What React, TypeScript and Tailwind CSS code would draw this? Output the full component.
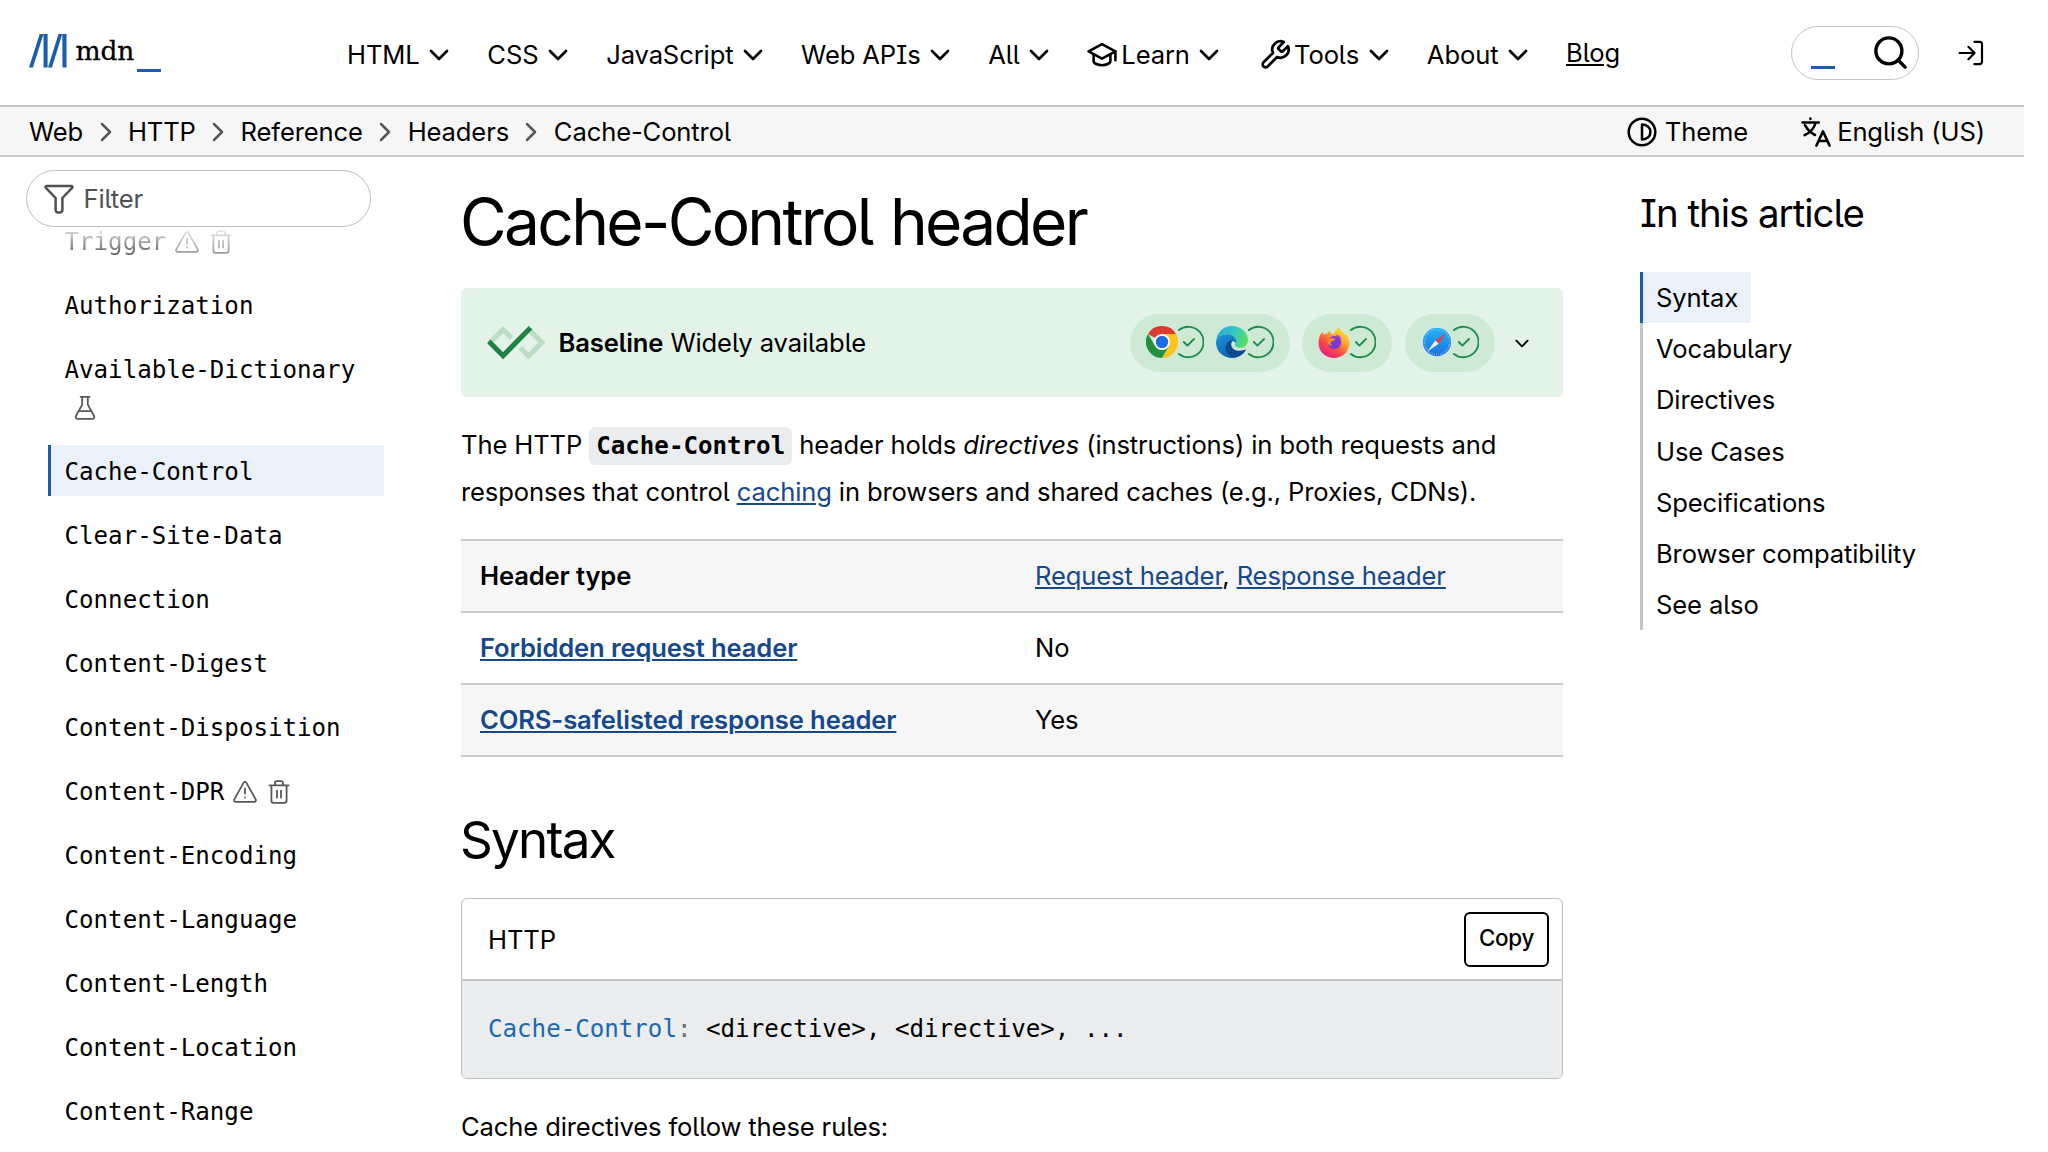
import React from "react";
import { Search } from "lucide-react";

const sans =
  "font-['Inter','Liberation_Sans',sans-serif] [font-feature-settings:'cv05','cv08']";
const mono = "font-['DejaVu_Sans_Mono','Liberation_Mono',monospace] text-[24.15px] tracking-normal";

function Chevron({ className }: { className: string }) {
  return (
    <svg viewBox="0 0 20 12" className={className} fill="none" stroke="currentColor" strokeWidth="2.7" strokeLinecap="round" strokeLinejoin="round">
      <path d="M2 2l8 8 8-8" />
    </svg>
  );
}

function CrumbArrow() {
  return (
    <svg viewBox="0 0 12 20" className="h-5 w-3 shrink-0 text-[#55595c]" fill="none" stroke="currentColor" strokeWidth="2.5" strokeLinecap="round" strokeLinejoin="round">
      <path d="M2 2l8 8-8 8" />
    </svg>
  );
}

function CapIcon() {
  return (
    <svg viewBox="0 0 30 26" className="mr-[4px] h-[26px] w-[30px]" fill="none" stroke="currentColor" strokeWidth="2.6" strokeLinecap="round" strokeLinejoin="round">
      <path d="M1.6 9.4L15 2.2l13.4 7.2L15 16.6z" />
      <path d="M28.4 9.4v8.8" />
      <path d="M6.6 12.4v6.8c0 2.2 4.6 4 8.4 4s8.4-1.8 8.4-4v-6.8" />
    </svg>
  );
}

function WrenchIcon() {
  return (
    <svg viewBox="1 1 22 22" className="mr-[4.500px] ml-[2px] h-[32px] w-[30px]" fill="none" stroke="currentColor" strokeWidth="2" strokeLinecap="round" strokeLinejoin="round">
      <path d="M14.7 6.3a1 1 0 0 0 0 1.4l1.6 1.6a1 1 0 0 0 1.4 0l3.77-3.77a6 6 0 0 1-7.94 7.94l-6.91 6.91a2.12 2.12 0 0 1-3-3l6.91-6.91a6 6 0 0 1 7.94-7.94l-3.76 3.76z" />
    </svg>
  );
}

function WarnIcon() {
  return (
    <svg viewBox="0 0 24 24" className="ml-[9px] h-6 w-6" fill="none" stroke="#55595c" strokeWidth="1.8" strokeLinecap="round" strokeLinejoin="round">
      <path d="M10.7 2.6L1.3 19.4a1.6 1.6 0 0 0 1.4 2.4h18.6a1.6 1.6 0 0 0 1.4-2.4L13.3 2.6a1.5 1.5 0 0 0-2.6 0z" />
      <path d="M12 8.6v5M12 17.4v.2" />
    </svg>
  );
}

function TrashIcon() {
  return (
    <svg viewBox="0 0 22 24" className="ml-[11px] h-6 w-[22px]" fill="none" stroke="#55595c" strokeWidth="1.8" strokeLinecap="round" strokeLinejoin="round">
      <path d="M1.4 5.4h19.2M3.4 5.4v15.4a2 2 0 0 0 2 2h11.2a2 2 0 0 0 2-2V5.4M7 5.2V3a1.800 1.800 0 0 1 1.800-1.800h4.400A1.800 1.800 0 0 1 15 3v2.200M9 10.600v7M13 10.600v7" />
    </svg>
  );
}

function FlaskIcon() {
  return (
    <svg viewBox="0 0 22 26" className="ml-[9px] h-[26px] w-[22px]" fill="none" stroke="#55595c" strokeWidth="1.8" strokeLinecap="round" strokeLinejoin="round">
      <path d="M6.6 1.8h9M8.2 2v7.6L1.9 21a2 2 0 0 0 1.8 2.9h14.6a2 2 0 0 0 1.8-2.9L13.8 9.6V2M4.6 16.2h12.8" />
    </svg>
  );
}

function CheckArc() {
  return (
    <svg viewBox="0 0 26 34" className="h-[34px] w-[26px]" fill="none" stroke="#1e8e4e" strokeWidth="1.9" strokeLinecap="round" strokeLinejoin="round">
      <path d="M.9 5.1a15.2 15.2 0 1 1 0 23.8" />
      <path d="M5.8 17l3.6 3.6 6.6-6.6" />
    </svg>
  );
}

function ChromeLogo() {
  return (
    <svg viewBox="0 0 32 32" className="h-8 w-8">
      <path d="M16 16L2.1 8A16 16 0 0 1 29.9 8z" fill="#dd3b2e" />
      <path d="M16 8h13.9A16 16 0 0 1 16 32l6.9-12z" fill="#fcc31e" />
      <path d="M2.1 8A16 16 0 0 0 16 32l6.9-12-13.8 0z" fill="#23903f" />
      <circle cx="16" cy="16" r="8" fill="#fff" />
      <circle cx="16" cy="16" r="6.2" fill="#1a6ce0" />
    </svg>
  );
}

function EdgeLogo() {
  return (
    <svg viewBox="0 0 32 32" className="h-8 w-8">
      <defs>
        <linearGradient id="edgeTop" x1="0" y1="0.3" x2="1" y2="0.6">
          <stop offset="0" stopColor="#2aa9dc" />
          <stop offset="0.5" stopColor="#34c5c6" />
          <stop offset="1" stopColor="#5ade62" />
        </linearGradient>
        <linearGradient id="edgeLow" x1="0" y1="0" x2="0.6" y2="1">
          <stop offset="0" stopColor="#1a94dc" />
          <stop offset="1" stopColor="#0f5fae" />
        </linearGradient>
      </defs>
      <path d="M.2 14.5C1 6 7.700 0 16 0c9 0 16 6.600 16 14 0 4.500-3.400 7.800-8 7.800-3 0-5.200-1.100-5.200-2.500 0-.9 1.500-1.500 1.500-4 0-3.700-4-7-9.300-7C5.500 8.300 1.500 11 .2 14.500z" fill="url(#edgeTop)" />
      <path d="M0 16.500C.3 11 5 8.200 11 8.200c5.500 0 9.300 3.400 9.300 7 0 1-.2 1.800-.6 2.400C18.500 15 15.500 14 13 15.500c-3.500 2-3.500 8 .5 11.500 3 2.700 8 3.400 12 .8C23 30.500 19.500 32 16 32 7 32 0 25 0 16.500z" fill="url(#edgeLow)" />
      <path d="M13.500 14.800C9.500 17 8 23 11.500 27.500c2.300 3 5.500 4.500 8.200 4C24 30.600 27.500 28 29.600 24.600c.4-.7-.2-1.200-.9-.9-5.200 2.300-12.200 1.200-13.400-4.200-.5-2 .2-3.700 1.700-4.700-1.100-.6-2.400-.6-3.500 0z" fill="#0c4a92" />
    </svg>
  );
}

function FirefoxLogo() {
  return (
    <svg viewBox="0 0 32 32" className="h-8 w-8">
      <defs>
        <linearGradient id="fox" x1="0.85" y1="0.05" x2="0.2" y2="0.95">
          <stop offset="0" stopColor="#ffe93c" />
          <stop offset="0.35" stopColor="#ffa52b" />
          <stop offset="0.65" stopColor="#fb4c41" />
          <stop offset="1" stopColor="#e8198b" />
        </linearGradient>
      </defs>
      <path d="M4.500 5.500c.2 1.500.8 2.400 1.500 3C7 7.800 8 7.500 9.500 7.400 10 6 11 5.200 12 4.700c0 1.600.8 2.600 2.200 3.300h2C16.200 5.600 18.500 2.500 21 1c.3 2.200 2 3.400 4 5.300 1 1 1.700 2 2.100 3 .3-.5.2-1.300 0-2C30 10 31.500 13.500 31.500 17 31.500 25.500 24.500 32 16 32S.5 25.500.5 17c0-4.300 1.500-8.500 4-11.500z" fill="url(#fox)" />
      <circle cx="16.500" cy="16.500" r="6.600" fill="#7a3ad8" />
      <path d="M9.500 14c2-2.600 5-2.200 7-1.600 1.200.4 1.200 1.300 0 1.800-1.500.7-3.500.9-3.900 2.600-.2 1.200.5 2 1.500 2.600-3 .6-5.200-2-4.600-5.400z" fill="#ff8a2a" />
      <path d="M17.500 8.500c3 .3 5.500 2.500 5.900 5.600-1-1.400-2.300-1.900-3.700-1.700-.3-1.700-1-2.900-2.200-3.900z" fill="#b833e1" />
    </svg>
  );
}

function SafariLogo() {
  return (
    <svg viewBox="0 0 32 32" className="h-8 w-8">
      <defs>
        <linearGradient id="saf" x1="0" y1="0" x2="0" y2="1">
          <stop offset="0" stopColor="#24b2f4" />
          <stop offset="1" stopColor="#1d6fe0" />
        </linearGradient>
      </defs>
      <circle cx="16" cy="16" r="15.300" fill="#dbe7ee" />
      <circle cx="16" cy="16" r="14.200" fill="url(#saf)" />
      <circle cx="16" cy="16" r="12.600" fill="none" stroke="#8fcbf6" strokeWidth="1.600" strokeDasharray=".7 1.500" />
      <path d="M25.500 7L17.600 17.800l-3.300-3.400z" fill="#e8403c" />
      <path d="M6.500 25.500l7.800-11.100 3.300 3.400z" fill="#f4f6f8" />
    </svg>
  );
}

const nav = [
  { label: "HTML" },
  { label: "CSS" },
  { label: "JavaScript" },
  { label: "Web APIs" },
  { label: "All" },
  { label: "Learn", icon: <CapIcon /> },
  { label: "Tools", icon: <WrenchIcon /> },
  { label: "About" },
];

function Header() {
  return (
    <header className="flex h-[107px] items-center border-b-2 border-[#c6c6c6]">
      <div className="flex w-[347px] shrink-0 items-start pl-[29px]">
        <svg viewBox="0 0 38 34" className="h-[34px] w-[38px]">
          <path d="M0 33.500L10.700 0h3.800L3.900 33.500zM14.500 0h4.100v33.500h-4zM19 33.500L29.500 0h3.800L22.900 33.500zM33.300 0h4.200v33.500h-4z" fill="#1b5cad" />
        </svg>
        <span className="ml-[8.500px] font-['DejaVu_Serif','Liberation_Serif',serif] text-[26.500px] leading-[34px] [-webkit-text-stroke:0.300px_#000]">mdn</span>
        <span className="ml-[3px] mt-[35px] h-[3px] w-[24px] bg-[#1b5cad]" />
      </div>
      <nav className="mt-[5px] flex items-center gap-[38.200px]">
        {nav.map((n) => (
          <span key={n.label} className="flex items-center">
            {n.icon}
            {n.label}
            <Chevron className="ml-[9.500px] h-3 w-5" />
          </span>
        ))}
        <a className="mb-[3px] underline decoration-[2px] underline-offset-[2px]">Blog</a>
      </nav>
      <div className="ml-auto mr-[105px] flex h-[54px] w-[128px] items-center rounded-full border-[1.600px] border-[#c6c6c6] pl-[19px]">
        <span className="mt-[29px] h-[3px] w-6 bg-[#1b5cad]" />
        <Search className="ml-[36px] h-[39px] w-[39px]" strokeWidth={2.100} />
      </div>
      <svg viewBox="0 0 26 26" className="mr-[40px] -ml-[66px] h-[26px] w-[26px]" fill="none" stroke="currentColor" strokeWidth="2.200" strokeLinecap="round" strokeLinejoin="round">
        <path d="M1.600 13h15M10.400 6.800l6.200 6.200-6.200 6.200M16.400 1.800h5.200a2.400 2.400 0 0 1 2.400 2.400v17.600a2.400 2.400 0 0 1-2.400 2.400h-5.200" />
      </svg>
    </header>
  );
}

const crumbs = ["Web", "HTTP", "Reference", "Headers", "Cache-Control"];

function Breadcrumbs() {
  return (
    <div className="flex h-[50px] items-center border-b-2 border-[#c9c9c9] bg-[#f6f6f6] pt-[2px] pl-[29px]">
      <div className="flex items-center gap-[16.400px]">
        {crumbs.map((c, i) => (
          <React.Fragment key={c}>
            {i > 0 && <CrumbArrow />}
            <span>{c}</span>
          </React.Fragment>
        ))}
      </div>
      <div className="ml-auto flex items-center pr-[39px]">
        <svg viewBox="0 0 30 30" className="h-[30px] w-[30px]" fill="none" stroke="currentColor" strokeWidth="2.500" strokeLinejoin="round">
          <circle cx="15" cy="15" r="13.300" />
          <path d="M15 7.400v15.200c5 0 8.400-3.200 8.400-7.600S20 7.400 15 7.400z" />
        </svg>
        <span className="ml-[8px]">Theme</span>
        <svg viewBox="0 0 30 30" className="ml-[53px] h-[30px] w-[30px]" fill="none" stroke="currentColor" strokeWidth="2.500" strokeLinecap="round" strokeLinejoin="round">
          <path d="M9.400 1.600v.4M1.600 5.400h16.200M4 8.200c2.200 4.200 5.400 7.600 10 9.800M14.600 6c-1.600 5.400-5.400 9.600-11 12.200M15.400 28.600l6.600-14.200 6.600 14.200M17.800 24h8.400" />
        </svg>
        <span className="ml-[6px]">English (US)</span>
      </div>
    </div>
  );
}

const side = [
  { t: "Authorization" },
  { t: "Available-Dictionary", flask: true },
  { t: "Cache-Control", active: true },
  { t: "Clear-Site-Data" },
  { t: "Connection" },
  { t: "Content-Digest" },
  { t: "Content-Disposition" },
  { t: "Content-DPR", dep: true },
  { t: "Content-Encoding" },
  { t: "Content-Language" },
  { t: "Content-Length" },
  { t: "Content-Location" },
  { t: "Content-Range" },
];

function Sidebar() {
  return (
    <aside className="w-[461px] shrink-0 pt-[13px]">
      <div className="relative z-10 ml-[26px] flex h-[57px] w-[345px] items-center rounded-full border-[1.600px] border-[#c0c0c0] bg-white pl-[17px] text-[#4e5255]">
        <svg viewBox="0 0 30 30" className="h-[30px] w-[30px]" fill="none" stroke="currentColor" strokeWidth="2.500" strokeLinejoin="round">
          <path d="M2.700 2h24.600a1.100 1.100 0 0 1 .8 1.900L18.400 14v12.100a2.400 2.400 0 0 1-2.400 2.400h-2a2.400 2.400 0 0 1-2.400-2.400V14L1.900 3.900A1.100 1.100 0 0 1 2.700 2z" />
        </svg>
        <span className="ml-[9.500px] pt-[2px]">Filter</span>
      </div>
      <div className={`${mono} -mt-[4px] leading-[38.400px]`}>
        <div className="mb-[17.400px] flex h-[38.400px] items-center pl-[64.500px] [mask-image:linear-gradient(to_bottom,transparent_1px,rgba(0,0,0,0.700)_35px)]">
          Trigger
          <WarnIcon />
          <TrashIcon />
        </div>
        <div className="flex flex-col gap-[12.800px]">
          {side.map((s) => (
            <div
              key={s.t}
              className={
                s.active
                  ? "ml-12 w-[336px] border-l-[3.200px] border-[#1b5cad] bg-[#eaf1fb] pt-[8px] pb-[4.800px] pl-[13.500px]"
                  : "pl-[64.500px] pt-[8px] pb-[4.800px]"
              }
            >
              <div className="flex items-center">
                {s.t}
                {s.dep && <WarnIcon />}
                {s.dep && <TrashIcon />}
              </div>
              {s.flask && (
                <div className="flex h-[38.400px] items-center">
                  <FlaskIcon />
                </div>
              )}
            </div>
          ))}
        </div>
      </div>
    </aside>
  );
}

const link = "text-[#17488c] underline decoration-[2px] underline-offset-[2px]";
const pill = "flex h-[58px] items-center rounded-full bg-[#cfead4] pb-px";

function Article() {
  return (
    <main className="w-[1102px] shrink-0 pt-[25px]">
      <h1 className="-ml-px h-20 text-[64px] leading-[80px] tracking-[-2.700px] whitespace-nowrap [word-spacing:3px]">Cache-Control header</h1>
      <div className="mt-[26px] flex h-[109px] items-center rounded-[6px] bg-[#e4f3e7] pl-[26px]">
        <svg viewBox="0 0 58 36" className="h-[36px] w-[58px]" fill="none" strokeWidth="5">
          <path d="M3 17.500L16 4.500l8.500 8.500M42 4.500l13 13-13.500 13.500-8.500-8.500" stroke="#bcdcc4" />
          <path d="M1.800 16.300L16 30.700 43.500 2.800" stroke="#1e8244" />
        </svg>
        <span className="ml-[13.500px] pt-[1px]">
          <b className="font-semibold">Baseline</b> Widely available
        </span>
        <div className="ml-auto flex items-center pr-[34px]">
          <div className={`${pill} w-[160px] pl-[16px]`}>
            <ChromeLogo />
            <CheckArc />
            <span className="w-[12px]" />
            <EdgeLogo />
            <CheckArc />
          </div>
          <div className={`${pill} ml-3 w-[90px] pl-[16px]`}>
            <FirefoxLogo />
            <CheckArc />
          </div>
          <div className={`${pill} ml-[13px] w-[90px] pl-[16px]`}>
            <SafariLogo />
            <CheckArc />
          </div>
          <Chevron className="ml-[20px] mt-px h-[9px] w-[14px]" />
        </div>
      </div>
      <p className="mt-[24.600px] leading-[46.080px] whitespace-nowrap">
        The HTTP{" "}
        <code className={`${mono} rounded-[6px] bg-[#ebecee] px-[7px] py-[5px] font-bold`}>Cache-Control</code>{" "}
        header holds <em>directives</em> (instructions) in both requests and
        <br />
        responses that control <a className={link}>caching</a> in browsers and shared caches (e.g., Proxies, CDNs).
      </p>
      <div className="mt-[24px] border-b-2 border-[#cacaca]">
        <div className="flex h-[72px] items-center border-t-2 border-[#cacaca] bg-[#f6f6f6] pl-[19px]">
          <span className="w-[555px] font-semibold">Header type</span>
          <span>
            <a className={link}>Request header</a>, <a className={link}>Response header</a>
          </span>
        </div>
        <div className="flex h-[72px] items-center border-t-2 border-[#cacaca] pl-[19px]">
          <span className="w-[555px] font-semibold">
            <a className={link}>Forbidden request header</a>
          </span>
          <span>No</span>
        </div>
        <div className="flex h-[72px] items-center border-t-2 border-[#cacaca] bg-[#f6f6f6] pl-[19px]">
          <span className="w-[555px] font-semibold">
            <a className={link}>CORS-safelisted response header</a>
          </span>
          <span>Yes</span>
        </div>
      </div>
      <h2 className="-ml-px mt-[50.400px] h-16 text-[51.200px] leading-[64px] tracking-[-1.800px]">Syntax</h2>
      <div className="mt-[27px] overflow-hidden rounded-[6px] border-[1.600px] border-[#bcc0c0]">
        <div className="flex h-[82px] items-center border-b-2 border-[#c2c6c6] pr-[13px] pl-[26px]">
          <span className="mt-[3px]">HTTP</span>
          <button className="ml-auto h-[55px] w-[85px] rounded-[6px] border-2 border-black pb-[2px] text-[22.400px] font-medium tracking-[-0.300px]">Copy</button>
        </div>
        <pre className={`${mono} h-[97px] bg-[#eaecee] pl-[26px] leading-[96px] tracking-[0.040px]`}>
          <span className="text-[#1a68b3]">Cache-Control</span>
          <span className="text-[#696d70]">:</span>
          {" <directive>, <directive>, ..."}
        </pre>
      </div>
      <p className="mt-[25px] leading-[46.080px]">Cache directives follow these rules:</p>
    </main>
  );
}

const toc = ["Vocabulary", "Directives", "Use Cases", "Specifications", "Browser compatibility", "See also"];

function Toc() {
  return (
    <aside className="ml-[77px] pt-[32px] whitespace-nowrap">
      <h2 className="h-[48px] text-[38.400px] leading-[48px] tracking-[-1px]">In this article</h2>
      <ul className="mt-[35px] leading-[51.200px]">
        <li className="flex border-l-[3px] border-[#1b5cad]">
          <span className="bg-[#eaf1fb] px-[13px]">Syntax</span>
        </li>
        {toc.map((t) => (
          <li key={t} className="border-l-[3px] border-[#c2c6c8] pl-[13px]">
            {t}
          </li>
        ))}
      </ul>
    </aside>
  );
}

export default function App() {
  return (
    <div className={`${sans} h-[1152px] w-[2048px] overflow-hidden bg-white text-[25.600px] leading-[38.400px] tracking-[-0.130px] text-black`}>
      <div className="w-[2024px]">
        <Header />
        <Breadcrumbs />
        <div className="flex">
          <Sidebar />
          <Article />
          <Toc />
        </div>
      </div>
    </div>
  );
}
